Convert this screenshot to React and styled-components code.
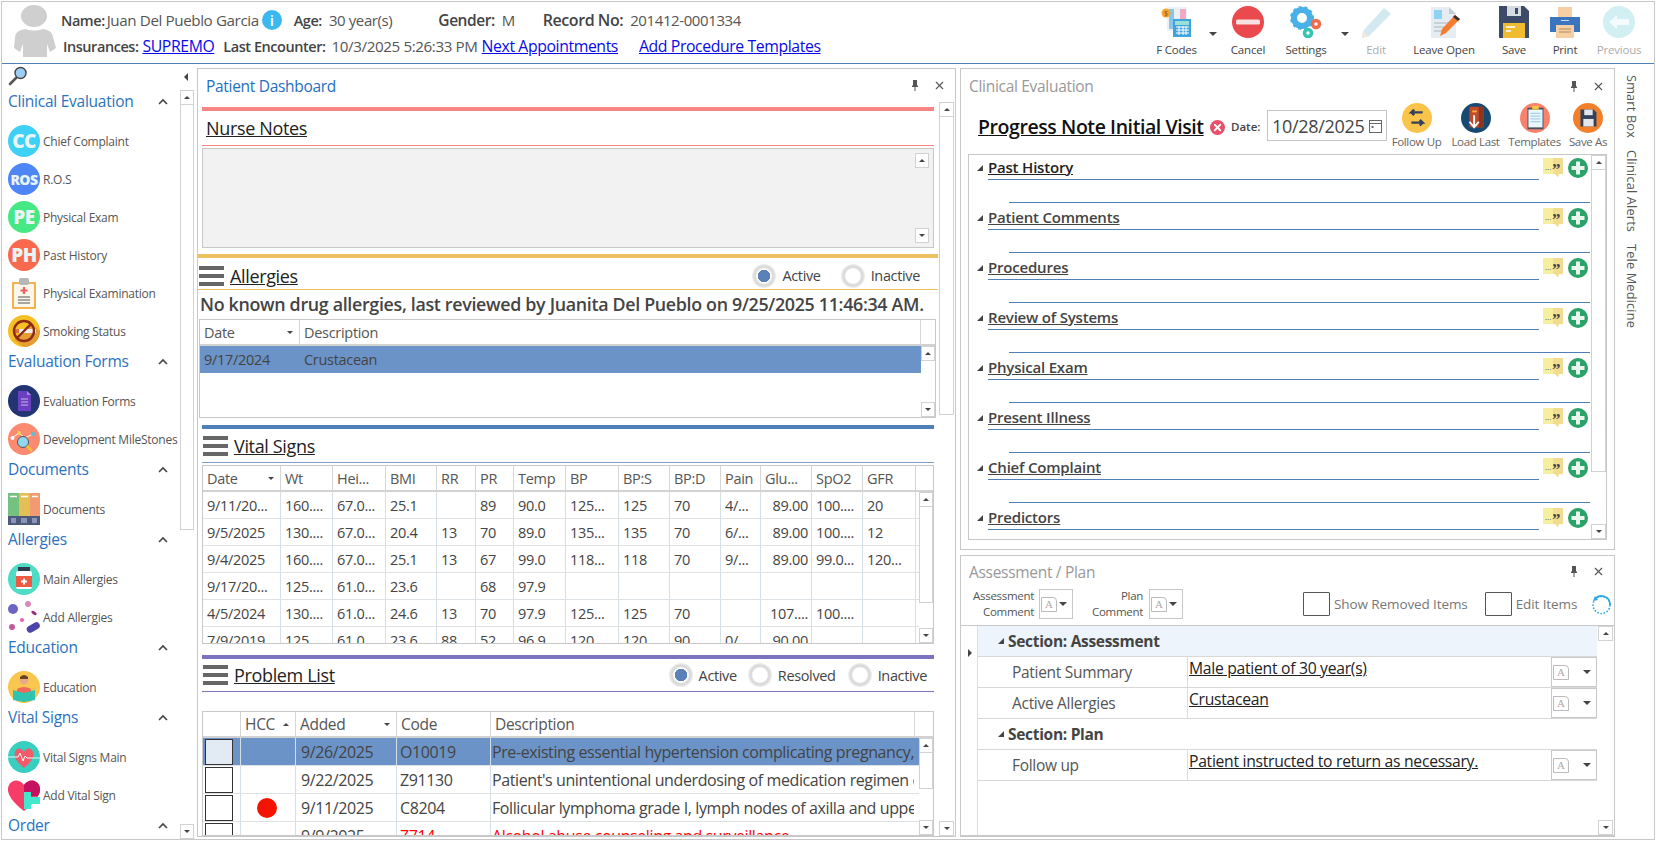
import React from 'react';
import styled, { createGlobalStyle, css } from 'styled-components';
import { X } from 'lucide-react';

const Global = createGlobalStyle`
  html, body { margin: 0; padding: 0; background: #fff; overflow: hidden; }
  * { box-sizing: border-box; }
  body { font-family: "Open Sans", "Noto Sans", "Liberation Sans", sans-serif; color: #444; }
`;

const Frame = styled.div`
  width: 1656px; height: 842px; padding: 1px 1px 2px 1px; background: #fff;
`;
const Inner = styled.div`
  width: 100%; height: 100%; border: 1px solid #c8c8c8; display: flex; flex-direction: column; overflow: hidden;
`;

/* ---------- header ---------- */
const Header = styled.header`
  height: 62px; flex: none; display: flex; border-bottom: 1px solid #4f7fb5; position: relative;
`;
const Avatar = styled.svg`
  width: 46px; height: 54px; margin: 3px 0 0 9px; flex: none;
`;
const Info = styled.div`
  display: flex; flex-direction: column; margin-left: 4px; flex: 1;
`;
const InfoRow = styled.div`
  display: flex; align-items: center; height: 26px; margin-top: ${p => p.$mt || 0}px; padding-left: ${p => p.$pl || 0}px;
`;
const Lbl = styled.span`
  font-size: ${p => p.$fs || 14.5}px; font-weight: 600; color: #444; letter-spacing: -0.45px; white-space: nowrap;
  margin-left: ${p => p.$ml || 0}px;
`;
const Val = styled.span`
  font-size: ${p => p.$fs || 15}px; color: #555; letter-spacing: -0.4px; white-space: nowrap; margin-left: ${p => p.$ml || 0}px;
`;
const HLink = styled.a`
  font-size: 15.8px; color: #0a0ae6; text-decoration: underline; letter-spacing: -0.4px; white-space: nowrap;
  margin-left: ${p => p.$ml || 0}px;
`;
const InfoDot = styled.span`
  width: 20px; height: 20px; border-radius: 50%; background: #3cb8f0; color: #fff; font-size: 15px; font-weight: 600;
  display: inline-flex; align-items: center; justify-content: center; margin-left: 3px;
`;
const Tools = styled.div`
  display: flex; margin-right: 7px; flex: none;
`;
const ToolBtn = styled.div`
  width: ${p => p.$w}px; display: flex; flex-direction: column; align-items: center; padding-top: 4px;
  opacity: ${p => (p.$off ? 0.45 : 1)};
`;
const ToolLabel = styled.span`
  font-size: 11.5px; color: #444; margin-top: 4px; white-space: nowrap; letter-spacing: -0.2px;
`;
const ToolCaret = styled.div`
  width: 16px; display: flex; justify-content: center; padding-top: 30px;
`;
const Tri = styled.i`
  display: inline-block; width: 0; height: 0; flex: none;
  ${p => p.$dir === 'up' && css`border-left: ${p.$s || 4}px solid transparent; border-right: ${p.$s || 4}px solid transparent; border-bottom: ${p.$s || 4}px solid #444;`}
  ${p => (!p.$dir || p.$dir === 'down') && css`border-left: ${p.$s || 4}px solid transparent; border-right: ${p.$s || 4}px solid transparent; border-top: ${p.$s || 4}px solid #444;`}
  ${p => p.$dir === 'left' && css`border-top: ${p.$s || 4}px solid transparent; border-bottom: ${p.$s || 4}px solid transparent; border-right: ${p.$s || 4}px solid #444;`}
  ${p => p.$dir === 'right' && css`border-top: ${p.$s || 4}px solid transparent; border-bottom: ${p.$s || 4}px solid transparent; border-left: ${p.$s || 4}px solid #444;`}
  ${p => p.$dir === 'corner' && css`border-left: 6px solid transparent; border-bottom: 6px solid #444;`}
`;

/* ---------- body ---------- */
const Body = styled.main`
  flex: 1; display: flex; min-height: 0;
`;
const Side = styled.aside`
  width: 194px; flex: none; display: flex; flex-direction: column; position: relative; overflow: hidden;
`;
const SideTop = styled.div`
  height: 26px; flex: none; display: flex; justify-content: space-between; padding: 2px 8px 0 6px;
`;
const CollapseTri = styled(Tri)`
  margin-top: 7px;
`;
const SideMain = styled.div`
  flex: 1; display: flex; min-height: 0; padding-right: 2px;
`;
const SideList = styled.div`
  flex: 1; overflow: hidden; padding-left: 6px; min-width: 0;
`;
const SideHead = styled.div`
  height: 32px; display: flex; justify-content: space-between; color: #2a72c0; font-size: 15.5px; line-height: 22px;
  letter-spacing: -0.25px; padding-right: 12px; white-space: nowrap;
  svg { margin-top: 8px; }
`;
const SideItem = styled.div`
  height: 38px; display: flex; align-items: center; font-size: 12px; color: #555; white-space: nowrap; letter-spacing: -0.25px;
`;
const SideIcon = styled.span`
  width: 32px; height: 32px; flex: none; margin-right: 3px; display: flex; align-items: center; justify-content: center;
  border-radius: ${p => (p.$c ? '50%' : 0)}; background: ${p => p.$c || 'transparent'};
  color: #e9f4f4; font-weight: 800; font-size: ${p => p.$fs || 17}px; letter-spacing: -0.5px;
`;

const Scroll = styled.div`
  width: ${p => p.$w || 14}px; flex: none; display: flex; flex-direction: column; position: relative;
`;
const ScrollBtn = styled.div`
  height: 15px; flex: none; border: 1px solid #d2d2d2; background: #fff; display: flex; align-items: center; justify-content: center;
`;
const ScrollThumb = styled.div`
  height: ${p => p.$h}px; flex: none; border: 1px solid #d2d2d2; border-top: 0; background: #fff;
`;
const ScrollFill = styled.div`
  flex: 1;
`;
const Bar = ({ thumb = 0, w }) => (
  <Scroll $w={w}>
    <ScrollBtn><Tri $dir="up" $s={3} /></ScrollBtn>
    {thumb > 0 && <ScrollThumb $h={thumb} />}
    <ScrollFill />
    <ScrollBtn><Tri $s={3} /></ScrollBtn>
  </Scroll>
);

const Panel = styled.section`
  border: 1px solid #c8c8c8; display: flex; flex-direction: column; min-height: 0; overflow: hidden;
`;
const TitleBar = styled.div`
  height: ${p => p.$h || 33}px; flex: none; display: flex; align-items: center; justify-content: space-between;
  padding: 0 9px 0 8px;
  font-size: 15.5px; letter-spacing: -0.3px; color: ${p => (p.$on ? '#1e6fc0' : '#999')};
`;
const TitleBtns = styled.div`
  display: flex; align-items: center; gap: 14px;
`;
const Dash = styled(Panel)`
  width: 759px; flex: none; margin: 4px 0 2px 1px;
`;
const DashMain = styled.div`
  flex: 1; display: flex; min-height: 0; padding-right: 1px;
`;
const DashBody = styled.div`
  flex: 1; min-width: 0; display: flex; flex-direction: column; overflow: hidden; padding: 5px 1px 0 0;
`;
const ColorBar = styled.div`
  height: 4px; flex: none; background: ${p => p.$c}; margin: ${p => p.$mt || 0}px ${p => p.$mx ?? 4}px 0;
`;
const SecHead = styled.div`
  height: ${p => p.$h || 34}px; flex: none; display: flex; align-items: center; justify-content: space-between;
  border-bottom: 1px solid ${p => p.$c}; margin: 0 ${p => p.$mx ?? 4}px;
  padding: ${p => p.$pt || 0}px ${p => p.$pr ?? 6}px 0 ${p => p.$pl ?? 1}px;
`;
const SecTitle = styled.div`
  display: flex; align-items: center; gap: 6px; font-size: 18px; color: #222; letter-spacing: -0.35px;
  span { text-decoration: underline; }
`;
const Burger = styled.div`
  width: 25px; height: 20px; display: flex; flex-direction: column; justify-content: space-between; flex: none;
  i { display: block; height: 4px; background: #666; }
`;
const NotesBox = styled.div`
  height: 100px; flex: none; margin: 2px 4px 0; background: #f2f2f2; border: 1px solid #c8c8c8; display: flex; justify-content: flex-end; padding: 4px;
`;
const Radios = styled.div`
  display: flex; align-items: center; font-size: 14.5px; letter-spacing: -0.35px; color: #444;
`;
const RadioDot = styled.span`
  width: 24px; height: 24px; border-radius: 50%; flex: none; margin: 0 6px 0 ${p => p.$ml || 0}px;
  background: radial-gradient(circle, ${p => (p.$on ? '#5a82b8' : '#fff')} 0 6px, #fff 6.5px 7px, #d5d5d5 9px, #eee 12px);
`;
const AlertText = styled.div`
  height: 29px; flex: none; line-height: 29px; margin-left: 2px; font-size: 17.85px; font-weight: 600; color: #444; letter-spacing: -0.32px; white-space: nowrap;
`;
const Table = styled.div`
  border: 1px solid #c8c8c8; flex: ${p => (p.$grow ? 1 : 'none')}; height: ${p => (p.$h ? `${p.$h}px` : 'auto')};
  margin: ${p => p.$mt || 0}px ${p => p.$mr ?? 4}px 0 ${p => p.$ml ?? 4}px; display: flex; flex-direction: column; overflow: hidden; min-height: 0;
`;
const THead = styled.div`
  height: 26px; flex: none; display: grid; grid-template-columns: ${p => p.$cols}; border-bottom: 2px solid #d2d2d2;
`;
const Th = styled.div`
  font-size: ${p => p.$fs || 14.5}px; letter-spacing: -0.3px; color: #555; display: flex; align-items: center; justify-content: space-between;
  padding: 0 ${p => p.$pr ?? 6}px 0 ${p => p.$pl ?? 4}px; border-right: 1px solid #d6d6d6; overflow: hidden; white-space: nowrap;
  ${p => p.$last && 'border-right: 0;'}
`;
const TBodyWrap = styled.div`
  flex: 1; display: flex; min-height: 0;
`;
const TRows = styled.div`
  flex: 1; min-width: 0; overflow: hidden;
`;
const Tr = styled.div`
  height: ${p => p.$h || 27}px; display: grid; grid-template-columns: ${p => p.$cols};
  background: ${p => (p.$sel ? '#6b93c7' : 'transparent')}; border-bottom: 1px solid ${p => (p.$line ? '#dde2e6' : 'transparent')};
`;
const Td = styled.div`
  font-size: ${p => p.$fs || 14.5}px; letter-spacing: ${p => (p.$fs ? -0.4 : -0.3)}px; color: ${p => p.$c || '#444'}; display: flex; align-items: center;
  padding-left: ${p => p.$pl ?? 4}px; justify-content: ${p => (p.$end ? 'flex-end' : 'flex-start')}; padding-right: ${p => (p.$end ? 3 : 0)}px;
  overflow: hidden; white-space: nowrap; border-right: 1px solid ${p => (p.$noline ? 'transparent' : '#d6dfe6')};
`;
const CheckCell = styled.span`
  width: 28px; height: 26px; border: 1px solid #333; background: ${p => (p.$sel ? '#e2eaf4' : '#fff')}; margin-left: -2px; flex: none;
`;
const RedDot = styled.span`
  width: 20px; height: 20px; border-radius: 50%; background: #f41300; margin-left: 12px;
`;
const RightCol = styled.div`
  width: 655px; flex: none; display: flex; flex-direction: column; gap: 5px; margin: 4px 0 2px 4px;
`;
const Eval = styled(Panel)`
  height: 482px; flex: none;
`;
const EvalTools = styled.div`
  height: 51px; flex: none; display: flex; align-items: flex-start; padding-left: 17px;
`;
const NoteTitle = styled.div`
  font-size: 19.5px; font-weight: 600; color: #111; text-decoration: underline; letter-spacing: -0.42px; margin-top: 10px; white-space: nowrap; width: 230px;
`;
const ClearDot = styled.span`
  width: 15px; height: 15px; border-radius: 50%; background: #e8506a; color: #fff; display: flex; align-items: center; justify-content: center; margin: 17px 0 0 2px; flex: none;
`;
const DateLbl = styled.span`
  font-size: 11.5px; font-weight: 600; margin: 16px 0 0 6px; color: #444; width: 36px; flex: none;
`;
const DateBox = styled.div`
  width: 120px; height: 31px; margin-top: 7px; border: 1px solid #c4c4c4; display: flex; align-items: center; justify-content: space-between;
  padding: 0 4px 0 4px; font-size: 18px; letter-spacing: -0.3px; color: #444; flex: none;
`;
const ActionBtn = styled.div`
  width: ${p => p.$w || 59}px; flex: none; display: flex; flex-direction: column; align-items: center;
  font-size: 11.5px; letter-spacing: -0.35px; color: #666; white-space: nowrap; gap: 1px;
`;
const EvalBox = styled.div`
  flex: 1; margin: 0 7px 9px; border: 1px solid #c8c8c8; display: flex; min-height: 0;
`;
const EvalList = styled.div`
  flex: 1; overflow: hidden; min-width: 0;
`;
const EvalSec = styled.div`
  height: 50px; padding-left: 8px; position: relative;
`;
const EvalHead = styled.div`
  display: flex; align-items: center; height: 25px;
`;
const EvalName = styled.div`
  flex: 1; margin: 0 4px 0 5px; height: 25px; border-bottom: 1px solid #4f7fb5; font-size: 15px; font-weight: 600; letter-spacing: -0.2px;
  color: ${p => (p.$first ? '#222' : '#444')}; line-height: 24px;
  span { text-decoration: underline; }
`;
const EvalLine = styled.div`
  height: 1px; background: #4f7fb5; margin: 22px 1px 0 32px;
`;
const EvalIcons = styled.div`
  display: flex; gap: 5px; align-items: center; margin-right: 3px; flex: none;
`;

const Plan = styled(Panel)`
  flex: 1; border-bottom-width: 2px;
`;
const PlanTools = styled.div`
  height: 39px; flex: none; display: flex; align-items: center; border-bottom: 1px solid #c8c8c8; padding-bottom: 4px;
`;
const PlanLbl = styled.div`
  width: ${p => p.$w}px; font-size: 11.5px; line-height: 16px; text-align: right; color: #555; letter-spacing: -0.3px; flex: none;
`;
const Combo = styled.div`
  width: ${p => p.$w || 34}px; height: ${p => p.$h || 30}px; border: 1px solid #c8c8c8; display: flex; align-items: center; justify-content: space-between; padding: 0 5px 0 1px; flex: none;
  margin-left: ${p => p.$ml || 0}px;
`;
const DocA = styled.span`
  width: 16px; height: 15px; border: 1px solid #bbb; color: #aaa; font-family: "Liberation Serif", serif; font-size: 11px; line-height: 13px; text-align: center; display: block;
  border-top-right-radius: 4px;
`;
const Check = styled.span`
  width: 27px; height: 24px; border: 1px solid #555; border-radius: 1px; flex: none; margin-left: ${p => p.$ml || 0}px;
`;
const CheckLbl = styled.span`
  font-size: 13.5px; color: #777; margin-left: 4px; letter-spacing: -0.1px; white-space: nowrap;
`;
const RefreshWrap = styled.span`
  margin-left: 14px; display: flex;
`;
const PlanMain = styled.div`
  flex: 1; display: flex; min-height: 0;
`;
const Gutter = styled.div`
  width: 16px; flex: none; padding: 14px 0 0 7px;
`;
const PlanGrid = styled.div`
  width: 620px; flex: none; border-left: 1px solid #d6dfe6; margin-right: 1px;
`;
const PlanSection = styled.div`
  height: 31px; display: flex; align-items: center; background: ${p => (p.$on ? '#edf4fb' : '#fff')}; border-bottom: 1px solid #d8d8d8;
  font-size: 15.5px; font-weight: 700; color: #444; padding-left: 20px; gap: 4px; letter-spacing: -0.3px;
`;
const PlanRow = styled.div`
  height: 31px; display: flex; border-bottom: 1px solid #d8d8d8;
`;
const PlanName = styled.div`
  width: 210px; flex: none; font-size: 15.5px; color: #555; letter-spacing: -0.3px; padding-left: 34px; display: flex; align-items: center; border-right: 1px solid #d6dfe6;
`;
const PlanValue = styled.div`
  flex: 1; font-size: 15.7px; color: #222; text-decoration: underline; letter-spacing: -0.28px; padding-left: 1px; line-height: 22px; white-space: nowrap;
`;
const Rail = styled.aside`
  flex: 1; display: flex; flex-direction: column; align-items: flex-start; gap: 12px; padding: 11px 0 0 8px;
`;
const RailText = styled.span`
  writing-mode: vertical-rl; font-size: 12.7px; color: #555; white-space: nowrap; letter-spacing: 0.2px;
`;

/* ---------- icons ---------- */
const I = ({ children, s = 32, vb = 32 }) => <svg width={s} height={s} viewBox={`0 0 ${vb} ${vb}`}>{children}</svg>;
const Pin = () => <svg width="8" height="11" viewBox="0 0 8 11"><path d="M2 0h4v5l1 1v1H4.5v4h-1V7H1V6l1-1z" fill="#555" /></svg>;
const Chevron = () => <svg width="10" height="7" viewBox="0 0 10 7"><path d="M1 6l4-4 4 4" fill="none" stroke="#444" strokeWidth="1.6" /></svg>;
const Win = () => <TitleBtns><Pin /><X size={13} color="#555" /></TitleBtns>;

const Magnifier = () => <svg width="20" height="20" viewBox="0 0 20 20"><path d="M2 18l6-6" stroke="#555" strokeWidth="2.6" strokeLinecap="round" /><circle cx="12.5" cy="7" r="5.5" fill="#9dcdf2" stroke="#444" strokeWidth="1.4" /></svg>;
const FCodes = () => <I><rect x="6" y="1" width="20" height="24" fill="#e9f0f8" /><rect x="8" y="3" width="5" height="20" fill="#8cc4ea" /><rect x="19" y="3" width="6" height="10" fill="#f2a8c0" /><rect x="12" y="13" width="18" height="18" fill="#3fa4dc" /><rect x="14" y="15" width="14" height="4" fill="#9be0d8" /><path d="M15 21h13M15 24h13M15 27h13M18 20v9M22 20v9M25 20v9" stroke="#fff" /><circle cx="5" cy="7" r="4.5" fill="#f4a62a" /><text x="5" y="10" fontSize="7" textAnchor="middle" fill="#844">$</text></I>;
const Cancel = () => <I><circle cx="16" cy="16" r="16" fill="#ea4a4d" /><rect x="4" y="13.5" width="24" height="5" rx="1.5" fill="#f8e2e2" /></I>;
const Settings = () => <I><circle cx="12" cy="12" r="8" fill="none" stroke="#4ab0e8" strokeWidth="6" /><circle cx="12" cy="12" r="11" fill="none" stroke="#4ab0e8" strokeWidth="2" strokeDasharray="3 3" /><circle cx="26" cy="18" r="3.5" fill="none" stroke="#f26b4b" strokeWidth="3.5" /><circle cx="18" cy="27" r="3.5" fill="none" stroke="#35c5b0" strokeWidth="3.5" /></I>;
const EditI = () => <I><path d="M3 25L24 2l7 6L9 30l-7 2z" fill="#9dcfe0" /><path d="M2 32l1-7 6 5z" fill="#e8c8b8" /></I>;
const LeaveOpen = () => <I><path d="M3 1h18l7 7v24H3z" fill="#e6edf2" /><path d="M21 1l7 7h-7z" fill="#c5ccd2" /><rect x="6" y="4" width="8" height="9" fill="#8fd3f4" /><path d="M6 17h16M6 21h12M6 25h9" stroke="#aab6c0" /><path d="M12 30l2-7L27 9l5 4-14 14z" fill="#f47c30" /><path d="M27 9l5 4-2 2-5-4z" fill="#333" /></I>;
const Save = () => <I><path d="M1 0h25l5 5v27H1z" fill="#3d4b68" /><rect x="9" y="0" width="14" height="10" fill="#d6dbe2" /><rect x="17" y="2" width="3" height="6" fill="#3d4b68" /><rect x="5" y="17" width="22" height="15" fill="#eebc2e" /><path d="M8 21h9M8 25h5" stroke="#fff" strokeWidth="1.6" /></I>;
const PrintI = () => <I><rect x="9" y="1" width="14" height="11" fill="#f6d0a4" /><path d="M1 11h30v15H1z" fill="#3a75bd" /><rect x="7" y="19" width="18" height="13" fill="#f6d0a4" /><path d="M10 23h12M10 26h12" stroke="#b08a60" /><rect x="12" y="14" width="8" height="1" fill="#cde" /></I>;
const Previous = () => <I><circle cx="16" cy="16" r="16" fill="#9ddde6" /><path d="M6 16l8-7v4h12v6H14v4z" fill="#e9f8fa" /></I>;

const Clipboard = () => <I><rect x="4" y="5" width="24" height="27" rx="1" fill="#f5b14c" /><rect x="6" y="7" width="20" height="23" fill="#faf6ec" /><rect x="11" y="1" width="10" height="7" rx="2" fill="#b5b8b8" /><path d="M16 10v7M12.5 13.5h7" stroke="#ef5d5d" strokeWidth="2.2" /><path d="M10 20h12M10 23h12M10 26h12" stroke="#555" /></I>;
const Smoking = () => <I><circle cx="16" cy="16" r="16" fill="#f7c022" /><path d="M16 32a16 16 0 0 0 16-16L22 8 6 25z" fill="#e49e34" /><rect x="5" y="14" width="23" height="4" fill="#f0f0f0" /><rect x="5" y="14" width="6" height="4" fill="#d8703a" /><circle cx="16" cy="16" r="10" fill="none" stroke="#8e2a16" strokeWidth="2.4" /><path d="M9 23L23 9" stroke="#8e2a16" strokeWidth="2.4" /></I>;
const EvalForm = () => <I><circle cx="16" cy="16" r="16" fill="#223472" /><path d="M10 6h9l4 4v16H10z" fill="#6a3fc0" /><path d="M19 6l4 4h-4z" fill="#a98be0" /><path d="M13 14h7M13 17h7M13 20h7" stroke="#c9b8ee" /></I>;
const Milestone = () => <I><circle cx="16" cy="16" r="16" fill="#fa8a70" /><path d="M4 15l7-5 6 5 8-4" fill="none" stroke="#fff" /><circle cx="11" cy="10" r="2" fill="#f5d04e" /><circle cx="25" cy="11" r="2" fill="#4ec3e0" /><circle cx="4.5" cy="15" r="2" fill="#fff" /><circle cx="15" cy="19" r="5.5" fill="#8fd8f0" stroke="#555" /><path d="M19 23l5 5" stroke="#f0c040" strokeWidth="2.5" /></I>;
const Docs = () => <I><rect x="0" y="0" width="11" height="32" fill="#74c180" /><rect x="11" y="0" width="11" height="32" fill="#e3bf55" /><rect x="22" y="0" width="10" height="32" fill="#f29a70" /><rect x="0" y="23" width="32" height="9" fill="#4d5a7c" /><path d="M2 3.5h7M13 3.5h7M24 3.5h6" stroke="#fff" strokeWidth="1.5" /><rect x="3" y="25" width="5" height="5" fill="#8a94b4" /><rect x="13" y="25" width="6" height="5" fill="#8a94b4" /><rect x="24" y="25" width="5" height="5" fill="#8a94b4" /></I>;
const MainAllergy = () => <I><circle cx="16" cy="16" r="16" fill="#4fdcc4" /><rect x="10" y="4" width="12" height="4" fill="#2d3a50" /><rect x="8" y="8" width="16" height="18" rx="2" fill="#fff" /><rect x="8" y="13" width="16" height="11" fill="#ef5a44" /><path d="M16 15.5v6M13 18.5h6" stroke="#fff" strokeWidth="2" /></I>;
const AddAllergy = () => <I><circle cx="5" cy="8" r="5" fill="#6c63c4" /><circle cx="20" cy="3" r="3" fill="#d98ab8" /><ellipse cx="26" cy="12" rx="3" ry="1.6" fill="#9a2c74" transform="rotate(35 26 12)" /><circle cx="14" cy="19" r="2" fill="#ee5cb8" /><circle cx="4" cy="26" r="3" fill="#c05c9c" /><rect x="18" y="23" width="14" height="7" rx="3.5" fill="#4c44a8" transform="rotate(-30 25 26)" /></I>;
const Edu = () => <I><circle cx="16" cy="16" r="16" fill="#f9c74f" /><circle cx="16" cy="9" r="4.5" fill="#e8a989" /><path d="M12 6q4-4 8 0v2h-8z" fill="#6b4226" /><path d="M9 24v-6q7-4 14 0v6z" fill="#ef6a5a" /><path d="M5 19l11 3 11-3v10l-11 2-11-2z" fill="#2ec4b0" /></I>;
const Vitals = () => <I><circle cx="16" cy="16" r="16" fill="#36cfc0" /><path d="M16 27C6 19 6 14 7 11c2-5 7-4 9 0 2-4 7-5 9 0 1 3 1 8-9 16z" fill="#f25a6a" /><path d="M0 16h10l2-4 3 8 2-5 2 2h13" fill="none" stroke="#e8f8f6" strokeWidth="1" /></I>;
const AddVital = () => <I><path d="M16 32C-2 18-1 10 1 6c3-6 11-6 15 0 4-6 12-6 15 0 2 4 3 12-15 26z" fill="#f83c68" /><path d="M16 6c4-6 12-6 15 0 1 2 2 6-1 11H16z" fill="#c41260" /><rect x="16" y="13" width="7" height="17" fill="#42e8cc" /><rect x="16" y="18" width="16" height="7" fill="#42e8cc" /></I>;

const Follow = () => <I s={30}><circle cx="16" cy="16" r="16" fill="#fac34a" /><path d="M22 10H10l3-3M10 10l3 3M10 21h12l-3-3M22 21l-3 3" fill="none" stroke="#33415c" strokeWidth="2.5" /></I>;
const LoadLast = () => <I s={30}><circle cx="16" cy="16" r="16" fill="#174a72" /><rect x="9" y="4" width="15" height="22" fill="#c04a2a" /><rect x="19" y="4" width="5" height="22" fill="#8a3520" /><rect x="12" y="8" width="5" height="2" fill="#f4b040" /><path d="M14 13v12M9 20l5 6 5-6" fill="none" stroke="#fff" strokeWidth="2" /></I>;
const Templates = () => <I s={30}><circle cx="16" cy="16" r="16" fill="#f9826c" /><rect x="8" y="5" width="17" height="23" fill="#47535f" /><rect x="9" y="7" width="15" height="19" fill="#eaf6fc" /><path d="M11 11h11M11 14h11M11 17h11M11 20h11" stroke="#8fc6e6" /><rect x="13" y="3" width="7" height="4" fill="#f4c542" /></I>;
const SaveAs = () => <I s={30}><circle cx="16" cy="16" r="16" fill="#f47f2a" /><path d="M8 7h14l3 3v15H8z" fill="#33415c" /><rect x="12" y="7" width="9" height="6" fill="#e3e6ea" /><rect x="11" y="17" width="11" height="8" fill="#e3e6ea" /></I>;
const Quote = () => <svg width="20" height="20" viewBox="0 0 20 20"><path d="M0 0h20v16h-4l-1 3-3-3H0z" fill="#f6efa0" /><path d="M10 0h10v16h-4l-1 3-3-3h-2z" fill="#f2dc90" /><text x="2" y="12" fontSize="8" fill="#555">...</text><text x="9" y="17" fontSize="17" fontWeight="800" fill="#444" fontFamily="Liberation Serif">”</text></svg>;
const Plus = () => <svg width="20" height="20" viewBox="0 0 20 20"><circle cx="10" cy="10" r="10" fill="#2ba268" /><path d="M10 3.5v13M3.5 10h13" stroke="#eaf7ef" strokeWidth="4" /></svg>;
const Cal = () => <svg width="13" height="14" viewBox="0 0 13 14"><rect x="0.5" y="1.5" width="12" height="12" fill="none" stroke="#666" /><path d="M1 4.5h11" stroke="#666" /><rect x="2.5" y="7" width="2" height="2" fill="#666" /></svg>;
const Refresh = () => <svg width="21" height="21" viewBox="0 0 21 21"><circle cx="10.5" cy="11" r="8.5" fill="none" stroke="#2ea8e0" strokeWidth="1.6" strokeDasharray="1.6 1.6" /><path d="M4 5a8.5 8.5 0 0 1 15 6" fill="none" stroke="#2ea8e0" strokeWidth="1.6" /><path d="M2 7l2-5 3 4z" fill="#2ea8e0" /></svg>;

/* ---------- data ---------- */
const sideData = [
  ['Clinical Evaluation', [['Chief Complaint', { c: '#3fd0f5', t: 'CC', fs: 19 }], ['R.O.S', { c: '#4f86f7', t: 'ROS', fs: 14 }], ['Physical Exam', { c: '#45e884', t: 'PE', fs: 19 }], ['Past History', { c: '#f8694e', t: 'PH', fs: 19 }], ['Physical Examination', { i: <Clipboard /> }], ['Smoking Status', { i: <Smoking /> }]]],
  ['Evaluation Forms', [['Evaluation Forms', { i: <EvalForm /> }], ['Development MileStones', { i: <Milestone /> }]]],
  ['Documents', [['Documents', { i: <Docs /> }]]],
  ['Allergies', [['Main Allergies', { i: <MainAllergy /> }], ['Add Allergies', { i: <AddAllergy /> }]]],
  ['Education', [['Education', { i: <Edu /> }]]],
  ['Vital Signs', [['Vital Signs Main', { i: <Vitals /> }], ['Add Vital Sign', { i: <AddVital /> }]]],
  ['Order', []],
];

const vitalCols = '78px 52px 53px 51px 39px 38px 52px 53px 51px 51px 40px 51px 51px 53px';
const vitalHead = ['Date', 'Wt', 'Hei...', 'BMI', 'RR', 'PR', 'Temp', 'BP', 'BP:S', 'BP:D', 'Pain', 'Glu...', 'SpO2', 'GFR'];
const vitalRows = [
  ['9/11/20...', '160....', '67.0...', '25.1', '', '89', '90.0', '125...', '125', '70', '4/...', '89.00', '100....', '20'],
  ['9/5/2025', '130....', '67.0...', '20.4', '13', '70', '89.0', '135...', '135', '70', '6/...', '89.00', '100....', '12'],
  ['9/4/2025', '160....', '67.0...', '25.1', '13', '67', '99.0', '118...', '118', '70', '9/...', '89.00', '99.0...', '120...'],
  ['9/17/20...', '125....', '61.0...', '23.6', '', '68', '97.9', '', '', '', '', '', '', ''],
  ['4/5/2024', '130....', '61.0...', '24.6', '13', '70', '97.9', '125...', '125', '70', '', '107....', '100....', ''],
  ['7/9/2019', '125', '61.0', '23.6', '88', '52', '96.9', '120', '120', '90', '0/', '90.00', '', ''],
];
const probCols = '38px 55px 101px 94px 424px';
const probRows = [
  { d: '9/26/2025', c: 'O10019', t: 'Pre-existing essential hypertension complicating pregnancy, third trimester', sel: true },
  { d: '9/22/2025', c: 'Z91130', t: "Patient's unintentional underdosing of medication regimen due to age" },
  { d: '9/11/2025', c: 'C8204', t: 'Follicular lymphoma grade I, lymph nodes of axilla and upper limb', dot: true },
  { d: '9/9/2025', c: 'Z714', t: 'Alcohol abuse counseling and surveillance', red: true },
];
const evalSecs = ['Past History', 'Patient Comments', 'Procedures', 'Review of Systems', 'Physical Exam', 'Present Illness', 'Chief Complaint', 'Predictors'];

const CommentCombo = ({ w, h, ml }) => <Combo $w={w} $h={h} $ml={ml}><DocA>A</DocA><Tri $s={4} /></Combo>;

export default function App() {
  return (
    <Frame>
      <Global />
      <Inner>
        <Header>
          <Avatar viewBox="0 0 46 54">
            <ellipse cx="23" cy="11" rx="13" ry="11" fill="#cfcfcf" />
            <path d="M4 32q1-7 10-8 9 3 18 0 9 1 10 8l3 11-6 4-3-8v13H12V39l-3 8-6-4z" fill="#cfcfcf" />
          </Avatar>
          <Info>
            <InfoRow $mt={5}>
              <Lbl>Name:</Lbl><Val $ml={2} $fs={15.2}>Juan Del Pueblo Garcia</Val><InfoDot>i</InfoDot>
              <Lbl $ml={12}>Age:</Lbl><Val $ml={7}>30 year(s)</Val>
              <Lbl $ml={46} $fs={15.5}>Gender:</Lbl><Val $ml={7}>M</Val>
              <Lbl $ml={28} $fs={16}>Record No:</Lbl><Val $ml={7}>201412-0001334</Val>
            </InfoRow>
            <InfoRow $pl={2}>
              <Lbl>Insurances:</Lbl><HLink $ml={4}>SUPREMO</HLink>
              <Lbl $ml={9}>Last Encounter:</Lbl><Val $ml={6} $fs={15.2}>10/3/2025 5:26:33 PM</Val>
              <HLink $ml={4}>Next Appointments</HLink><HLink $ml={21}>Add Procedure Templates</HLink>
            </InfoRow>
          </Info>
          <Tools>
            <ToolBtn $w={57}><FCodes /><ToolLabel>F Codes</ToolLabel></ToolBtn>
            <ToolCaret><Tri $s={4} /></ToolCaret>
            <ToolBtn $w={54}><Cancel /><ToolLabel>Cancel</ToolLabel></ToolBtn>
            <ToolBtn $w={62}><Settings /><ToolLabel>Settings</ToolLabel></ToolBtn>
            <ToolCaret><Tri $s={4} /></ToolCaret>
            <ToolBtn $w={46} $off><EditI /><ToolLabel>Edit</ToolLabel></ToolBtn>
            <ToolBtn $w={90}><LeaveOpen /><ToolLabel>Leave Open</ToolLabel></ToolBtn>
            <ToolBtn $w={50}><Save /><ToolLabel>Save</ToolLabel></ToolBtn>
            <ToolBtn $w={52}><PrintI /><ToolLabel>Print</ToolLabel></ToolBtn>
            <ToolBtn $w={56} $off><Previous /><ToolLabel>Previous</ToolLabel></ToolBtn>
          </Tools>
        </Header>
        <Body>
          <Side>
            <SideTop><Magnifier /><CollapseTri $dir="left" $s={4} /></SideTop>
            <SideMain>
              <SideList>
                {sideData.map(([h, items]) => (
                  <React.Fragment key={h}>
                    <SideHead>{h}<Chevron /></SideHead>
                    {items.map(([n, o]) => (
                      <SideItem key={n}>
                        <SideIcon $c={o.c} $fs={o.fs}>{o.t || o.i}</SideIcon>{n}
                      </SideItem>
                    ))}
                  </React.Fragment>
                ))}
              </SideList>
              <Bar thumb={425} />
            </SideMain>
          </Side>
          <Dash>
            <TitleBar $on><span>Patient Dashboard</span><Win /></TitleBar>
            <DashMain>
              <DashBody>
                <ColorBar $c="#f88484" />
                <SecHead $h={35} $c="#f88484" $pl={4}><SecTitle><span>Nurse Notes</span></SecTitle></SecHead>
                <NotesBox><Bar /></NotesBox>
                <ColorBar $c="#f0c060" $mt={6} $mx={0} />
                <SecHead $h={32} $pt={4} $c="#f0c060" $mx={0} $pr={18}>
                  <SecTitle><Burger><i /><i /><i /></Burger><span>Allergies</span></SecTitle>
                  <Radios><RadioDot $on />Active<RadioDot $ml={20} />Inactive</Radios>
                </SecHead>
                <AlertText>No known drug allergies, last reviewed by Juanita Del Pueblo on 9/25/2025 11:46:34 AM.</AlertText>
                <Table $h={99} $ml={1} $mr={2}>
                  <THead $cols="100px 621px 1fr">
                    <Th>Date<Tri $s={3} /></Th><Th>Description</Th><Th $last />
                  </THead>
                  <TBodyWrap>
                    <TRows>
                      <Tr $cols="100px 1fr" $sel $h={27}><Td $noline>9/17/2024</Td><Td $noline>Crustacean</Td></Tr>
                    </TRows>
                    <Bar />
                  </TBodyWrap>
                </Table>
                <ColorBar $c="#4f7fb8" $mt={7} />
                <SecHead $h={34} $c="#7f9fc8">
                  <SecTitle><Burger><i /><i /><i /></Burger><span>Vital Signs</span></SecTitle>
                </SecHead>
                <Table $h={179} $mt={2}>
                  <THead $cols={`${vitalCols} 1fr`}>
                    {vitalHead.map((h, i) => (
                      <Th key={h}>{h}{i === 0 && <Tri $s={3} />}</Th>
                    ))}
                    <Th $last />
                  </THead>
                  <TBodyWrap>
                    <TRows>
                      {vitalRows.map((r, i) => (
                        <Tr key={i} $cols={vitalCols} $line>
                          {r.map((c, j) => <Td key={j} $end={j === 11}>{c}</Td>)}
                        </Tr>
                      ))}
                    </TRows>
                    <Bar thumb={96} />
                  </TBodyWrap>
                </Table>
                <ColorBar $c="#7a74c0" $mt={11} />
                <SecHead $h={33} $c="#7a74c0" $pr={7}>
                  <SecTitle><Burger><i /><i /><i /></Burger><span>Problem List</span></SecTitle>
                  <Radios><RadioDot $on />Active<RadioDot $ml={11} />Resolved<RadioDot $ml={12} />Inactive</Radios>
                </SecHead>
                <Table $grow $mt={19}>
                  <THead $cols={`${probCols} 1fr`}>
                    <Th /><Th $fs={15.5}>HCC<Tri $dir="up" $s={3} /></Th><Th $fs={15.5}>Added<Tri $s={3} /></Th><Th $fs={15.5}>Code</Th><Th $fs={15.5}>Description</Th><Th $last />
                  </THead>
                  <TBodyWrap>
                    <TRows>
                      {probRows.map(r => (
                        <Tr key={r.c} $cols={probCols} $sel={r.sel} $h={28} $line>
                          <Td><CheckCell $sel={r.sel} /></Td>
                          <Td>{r.dot && <RedDot />}</Td>
                          <Td $pl={5} $fs={16}>{r.d}</Td>
                          <Td $pl={3} $fs={16} $c={r.red ? '#f00' : undefined}>{r.c}</Td>
                          <Td $pl={1} $fs={16} $noline $c={r.red ? '#f00' : undefined}>{r.t}</Td>
                        </Tr>
                      ))}
                    </TRows>
                    <Bar thumb={36} />
                  </TBodyWrap>
                </Table>
              </DashBody>
              <Bar w={15} thumb={298} />
            </DashMain>
          </Dash>
          <RightCol>
            <Eval>
              <TitleBar $h={34}><span>Clinical Evaluation</span><Win /></TitleBar>
              <EvalTools>
                <NoteTitle>Progress Note Initial Visit</NoteTitle>
                <ClearDot><X size={11} strokeWidth={4} /></ClearDot>
                <DateLbl>Date:</DateLbl>
                <DateBox>10/28/2025<Cal /></DateBox>
                <ActionBtn $w={59}><Follow />Follow Up</ActionBtn>
                <ActionBtn $w={59}><LoadLast />Load Last</ActionBtn>
                <ActionBtn $w={59}><Templates />Templates</ActionBtn>
                <ActionBtn $w={48}><SaveAs />Save As</ActionBtn>
              </EvalTools>
              <EvalBox>
                <EvalList>
                  {evalSecs.map((s, i) => (
                    <EvalSec key={s}>
                      <EvalHead>
                        <Tri $dir="corner" />
                        <EvalName $first={i === 0}><span>{s}</span></EvalName>
                        <EvalIcons><Quote /><Plus /></EvalIcons>
                      </EvalHead>
                      <EvalLine />
                    </EvalSec>
                  ))}
                </EvalList>
                <Bar w={15} thumb={302} />
              </EvalBox>
            </Eval>
            <Plan>
              <TitleBar $h={31}><span>Assessment / Plan</span><Win /></TitleBar>
              <PlanTools>
                <PlanLbl $w={73}>Assessment<br />Comment</PlanLbl>
                <CommentCombo ml={5} />
                <PlanLbl $w={70}>Plan<br />Comment</PlanLbl>
                <CommentCombo ml={6} />
                <Check $ml={120} /><CheckLbl>Show Removed Items</CheckLbl>
                <Check $ml={17} /><CheckLbl>Edit Items</CheckLbl>
                <RefreshWrap><Refresh /></RefreshWrap>
              </PlanTools>
              <PlanMain>
                <Gutter><Tri $dir="right" $s={4} /></Gutter>
                <PlanGrid>
                  <PlanSection $on><Tri $dir="corner" />Section: Assessment</PlanSection>
                  <PlanRow><PlanName>Patient Summary</PlanName><PlanValue>Male patient of 30 year(s)</PlanValue><CommentCombo w={46} h={30} /></PlanRow>
                  <PlanRow><PlanName>Active Allergies</PlanName><PlanValue>Crustacean</PlanValue><CommentCombo w={46} h={30} /></PlanRow>
                  <PlanSection><Tri $dir="corner" />Section: Plan</PlanSection>
                  <PlanRow><PlanName>Follow up</PlanName><PlanValue>Patient instructed to return as necessary.</PlanValue><CommentCombo w={46} h={30} /></PlanRow>
                </PlanGrid>
                <Bar w={15} />
              </PlanMain>
            </Plan>
          </RightCol>
          <Rail>
            <RailText>Smart Box</RailText>
            <RailText>Clinical Alerts</RailText>
            <RailText>Tele Medicine</RailText>
          </Rail>
        </Body>
      </Inner>
    </Frame>
  );
}
